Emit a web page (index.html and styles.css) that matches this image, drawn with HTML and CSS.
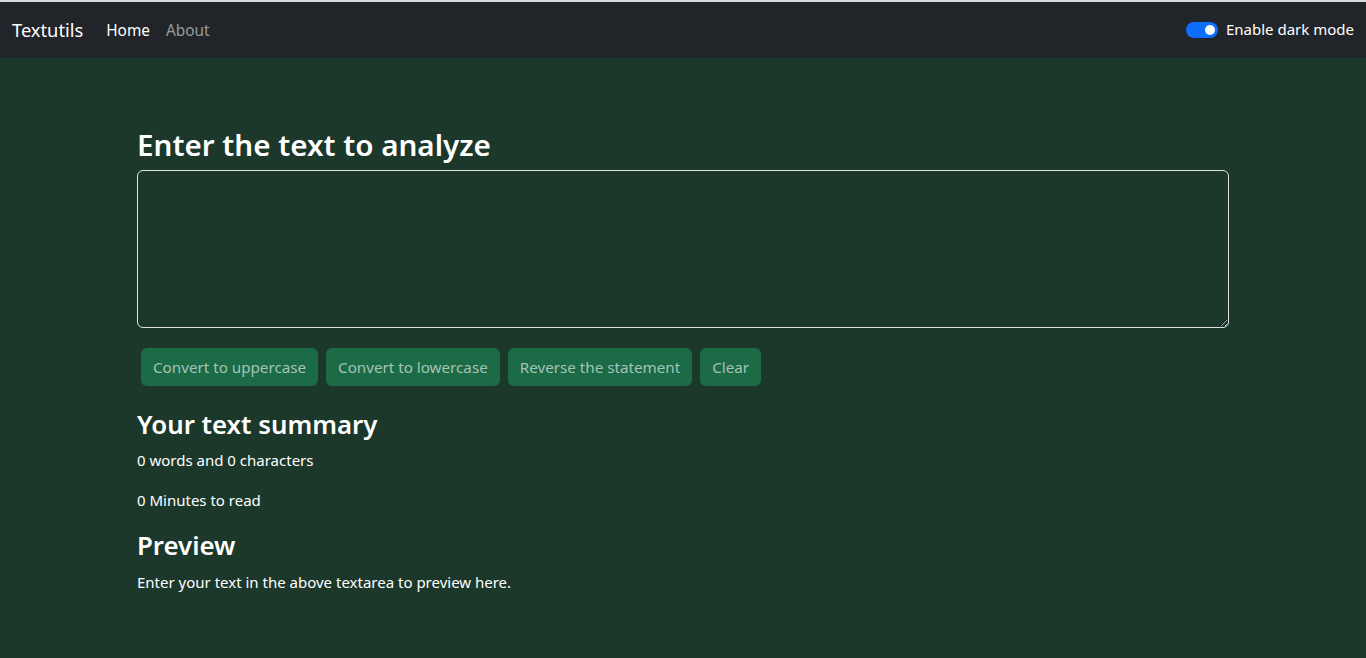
FILE: index.html
```html
<!DOCTYPE html>
<html lang="en">
<head>
<meta charset="utf-8">
<title>Textutils</title>
<link rel="stylesheet" href="styles.css">
</head>
<body>
<nav class="navbar">
  <div class="nav-left">
    <a class="brand" href="#">Textutils</a>
    <ul class="nav-links">
      <li><a class="nav-link active" href="#">Home</a></li>
      <li><a class="nav-link" href="#">About</a></li>
    </ul>
  </div>
  <label class="switch">
    <span class="switch-track"><span class="switch-knob"></span></span>
    <span class="switch-label">Enable dark mode</span>
  </label>
</nav>
<main class="container">
  <h1 class="title">Enter the text to analyze</h1>
  <textarea class="textbox" rows="8"></textarea>
  <div class="actions">
    <button class="btn">Convert to uppercase</button>
    <button class="btn">Convert to lowercase</button>
    <button class="btn">Reverse the statement</button>
    <button class="btn">Clear</button>
  </div>
  <section class="summary">
    <h2 class="subtitle">Your text summary</h2>
    <p>0 words and 0 characters</p>
    <p>0 Minutes to read</p>
    <h2 class="subtitle preview">Preview</h2>
    <p>Enter your text in the above textarea to preview here.</p>
  </section>
</main>
</body>
</html>
```
FILE: styles.css
```css
* { box-sizing: border-box; }
html, body { margin: 0; padding: 0; }
body {
  background: #1c382b;
  color: #ffffff;
  font-family: "Noto Sans", "Open Sans", sans-serif;
  font-size: 15px;
  line-height: 1.5;
  border-top: 2px solid #d9d9d9;
  min-height: 100vh;
}
.navbar {
  background: #212529;
  height: 56px;
  display: flex;
  align-items: center;
  justify-content: space-between;
  padding: 0 12px;
}
.nav-left { display: flex; align-items: center; }
.brand {
  color: #fff;
  text-decoration: none;
  font-size: 18.3px;
  margin-right: 15px;
}
.nav-links { list-style: none; margin: 0; padding: 0; display: flex; }
.nav-link {
  display: block;
  padding: 9px 8px 7px;
  font-size: 15.4px;
  color: rgba(255,255,255,.55);
  text-decoration: none;
}
.nav-link.active { color: #fff; }
.switch { display: flex; align-items: center; gap: 8px; margin-top: -1px; }
.switch-track {
  width: 32px; height: 16px; border-radius: 8px;
  background: #0d6efd;
  display: flex; align-items: center; justify-content: flex-end;
  padding: 0 3px;
}
.switch-knob { width: 10px; height: 10px; border-radius: 50%; background: #fff; }
.switch-label { font-size: 15px; }

.container {
  max-width: 1116px;
  margin: 0 auto;
  padding: 69px 12px 0;
}
.title {
  font-size: 29.6px;
  font-weight: 600;
  margin: 0 0 7px;
  line-height: 1.2;
}
.textbox {
  display: block;
  width: 100%;
  height: 158px;
  background: transparent;
  border: 1px solid #dee2e6;
  border-radius: 6px;
  color: #fff;
  font: inherit;
  padding: 6px 12px;
  margin-bottom: 20px;
}
.actions { display: flex; gap: 8px; padding-left: 4px; }
.btn {
  font-family: inherit;
  font-size: 15.2px;
  height: 38px;
  padding: 0 12px;
  border: 0;
  border-radius: 6px;
  background: #1a6b46;
  color: #a8c2b6;
}
.summary { margin-top: 23px; }
.subtitle {
  font-size: 25.8px;
  font-weight: 600;
  line-height: 1.2;
  margin: 0 0 9px;
}
.subtitle.preview { margin: 18px 0 9px; }
.summary p { margin: 0 0 16px; line-height: 24px; }
```
